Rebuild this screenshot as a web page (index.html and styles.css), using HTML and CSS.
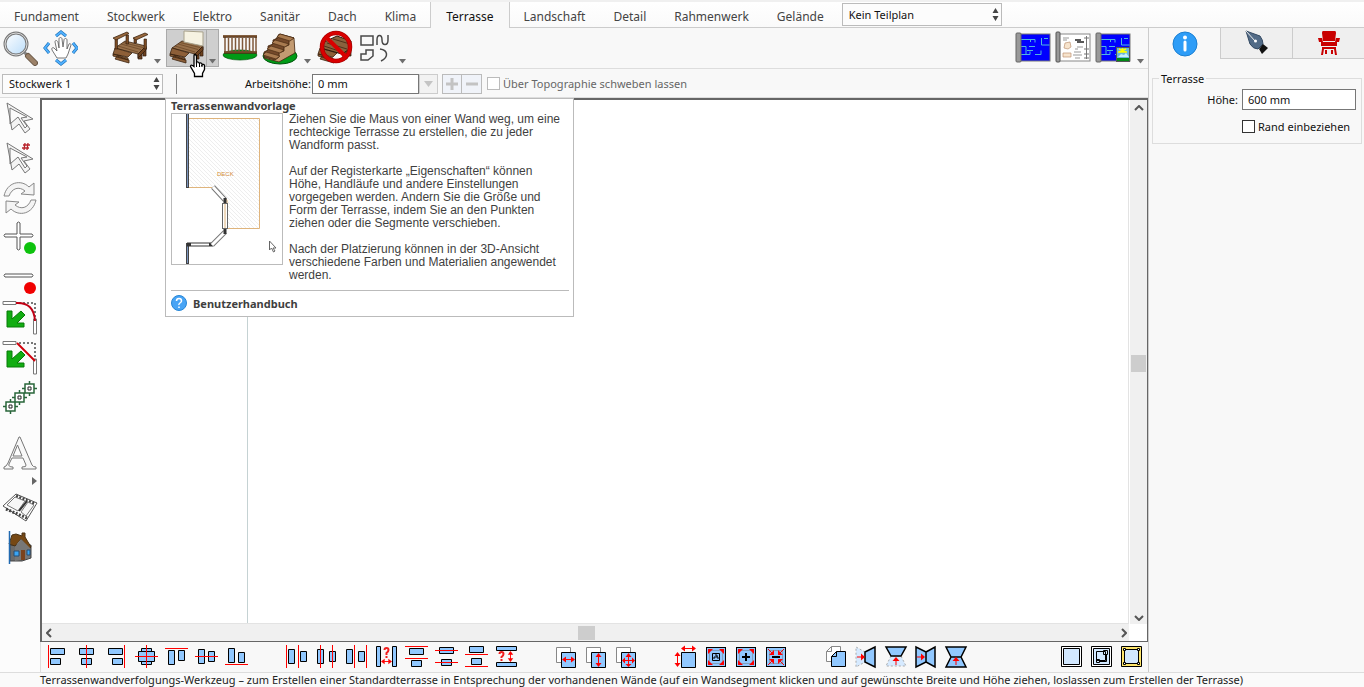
FILE: index.html
```html
<!DOCTYPE html>
<html lang="de">
<head>
<meta charset="utf-8">
<title>Terrasse</title>
<link rel="stylesheet" href="styles.css">
</head>
<body>
<svg class="defs" aria-hidden="true">
  <defs>
    <pattern id="hatch" width="4" height="4" patternUnits="userSpaceOnUse"><path d="M0 0l4 4M-1 3l2 2M3-1l2 2" stroke="#eee" stroke-width="1"/></pattern>
    <linearGradient id="lens" x1="0" y1="0" x2="1" y2="1"><stop offset="0" stop-color="#fff"/><stop offset="1" stop-color="#b9dcfa"/></linearGradient>
    <symbol id="caret" viewBox="0 0 7 5"><path d="M0 0h7L3.500 4.500z" fill="#6e6e6e"/></symbol>
    <symbol id="spin" viewBox="0 0 7 13"><path d="M3.500 0L6.500 5h-6zM3.500 13L.5 8h6z" fill="#444"/></symbol>
    <symbol id="harrow" viewBox="0 0 12 7"><path d="M2 3.500h8" stroke="#f00"/><path d="M0 3.500L4 .5v6zM12 3.500L8 .5v6z" fill="#f00"/></symbol>
    <symbol id="varrow" viewBox="0 0 7 12"><path d="M3.500 2v8" stroke="#f00"/><path d="M3.500 0L.5 4h6zM3.500 12L.5 8h6z" fill="#f00"/></symbol>
    <symbol id="corners" viewBox="0 0 24 24"><rect x="2.500" y="2.500" width="19" height="19" fill="#91c8ff" stroke="#000"/><rect x="5.500" y="5.500" width="13" height="13" fill="none" stroke="#777" stroke-dasharray="1 1"/></symbol>
    <symbol id="plan" viewBox="0 0 36 36"><rect x="3" y="4" width="32" height="27" fill="#00f" stroke="#777"/><path d="M6 9.500h14v3M15.500 9v3M6 16.500h5v8M6 24.500h9v-3M14 16.500h6M20 24.500h6v-4M26.500 8v7h8M29 8.500h4M12 20.500h6" fill="none" stroke="#4fb7df"/><rect x="1" y="3" width="5" height="29" rx="1" fill="#999" stroke="#666"/></symbol>
    <symbol id="deck" viewBox="0 0 36 36"><path d="M5 17h4v9H5zM26 21h4v8h-4zM31 17h3v9h-3z" fill="#6d421f" stroke="#2c190b" stroke-width=".7"/><path d="M3 18L13 11l21 5-8 8z" fill="#98704a" stroke="#3c2410" stroke-width=".8"/><path d="M6 16l20 6M9 14l20 5.500M11 12.500l20 5" stroke="#5c3a1c" stroke-width=".6"/><path d="M26 24l8-8v4l-8 8z" fill="#6d421f" stroke="#2c190b" stroke-width=".7"/><path d="M3 18l17 5-4 4L1 24zM1 24l15 4v2L1 26zM5 26l12 4v3L3 29z" fill="#8d5f38" stroke="#3c2410" stroke-width=".8"/></symbol>
  </defs>
</svg>

<div class="app">
  <nav class="tabs">
    <button class="tab">Fundament</button>
    <button class="tab">Stockwerk</button>
    <button class="tab">Elektro</button>
    <button class="tab">Sanitär</button>
    <button class="tab">Dach</button>
    <button class="tab">Klima</button>
    <button class="tab active">Terrasse</button>
    <button class="tab">Landschaft</button>
    <button class="tab">Detail</button>
    <button class="tab">Rahmenwerk</button>
    <button class="tab">Gelände</button>
    <span class="pick part"><select aria-label="Teilplan"><option>Kein Teilplan</option></select><svg class="spin"><use href="#spin"/></svg></span>
  </nav>

  <div class="work">
    <main class="editor">
      <div class="toolbar">
        <button class="tool" aria-label="Zoom"><svg viewBox="0 0 36 36"><path d="M22 22l5 5" stroke="#888" stroke-width="3"/><path d="M26 26l7 7" stroke="#6b5948" stroke-width="6" stroke-linecap="round"/><path d="M26 26l7 7" stroke="#9b8168" stroke-width="4" stroke-linecap="round"/><circle cx="14" cy="14" r="11" fill="url(#lens)" stroke="#777" stroke-width="3"/><circle cx="14" cy="14" r="11" fill="none" stroke="#ddd"/></svg></button>
        <button class="tool" aria-label="Verschieben"><svg viewBox="0 0 36 36"><path d="M14 6l5-4 5 4M14 30l5 4 5-4M7 13l-4 5 4 5M31 13l4 5-4 5" fill="none" stroke="#216fae" stroke-width="3"/><path d="M14 6l5-4 5 4M14 30l5 4 5-4M7 13l-4 5 4 5M31 13l4 5-4 5" fill="none" stroke="#4fb0ff" stroke-width="2"/><path d="M15 28l-5-8c-1-2 1-3 2-2l3 3-2-9c0-2 2-2 3 0l1 6V9c0-2 3-2 3 0l1 8 1-7c0-2 3-2 3 0v9l2-5c1-1 2 0 2 1l-3 9-2 4z" fill="#fff" stroke="#555" stroke-width=".8"/></svg></button>
        <span class="gap"></span>
        <button class="tool" aria-label="Terrasse"><svg viewBox="0 0 36 36"><use href="#deck" width="36" height="36"/><path d="M3 9h2.500v10H3zM14 5h2.500v9H14zM32 9h2.500v10H32zM22 8h2.500v5H22z" fill="#7b4c25" stroke="#2c190b" stroke-width=".6"/><path d="M1 8L15 2l2 1.500L4 10zM21 8l12-5 3 1.500L24 10z" fill="#98673c" stroke="#3c2410" stroke-width=".8"/></svg></button>
        <button class="drop" aria-label="Terrasse Auswahl"><svg><use href="#caret"/></svg></button>
        <span class="split">
          <button class="tool" aria-label="Terrassenwandvorlage"><svg viewBox="0 0 36 36"><use href="#deck" width="36" height="36"/><path d="M15 1l19 1v14l-19-4z" fill="#f6f2e2" stroke="#a9a28c"/></svg></button>
          <button class="drop" aria-label="Vorlage Auswahl"><svg><use href="#caret"/></svg></button>
          <svg class="hand" viewBox="0 0 17 25"><path d="M5.500 1.500q2 0 2 2v7q0-2 1.500-1.500t1.500 2q0-1.500 1.500-1t1 2q2-1.500 2.500.5v4l-2 4v3h-8v-3l-4-7q0-2 2-1l1.500 1v-10q0-2 .5-2z" fill="#fff" stroke="#000" stroke-width="1.300"/><path d="M7.500 10v4M10.500 11v3M13 12v2" stroke="#000"/></svg>
        </span>
        <button class="tool" aria-label="Geländer"><svg viewBox="0 0 36 36"><ellipse cx="18" cy="25" rx="17" ry="5" fill="#009b16" stroke="#00550c" stroke-width=".7"/><path d="M3 7v16M6.500 8v15M10 8v15M13.500 8v15M17 8v15M20.500 8v15M24 8v15M27.500 8v15M31 8v15M34 7v16" stroke="#80583a" stroke-width="1.500"/><path d="M1 6.500h34M2 22.500h33" stroke="#4d2e15" stroke-width="2.500"/><path d="M1 6h34M2 22h33" stroke="#8f6038"/></svg></button>
        <button class="tool" aria-label="Treppe"><svg viewBox="0 0 36 36"><ellipse cx="18" cy="26" rx="17" ry="8" fill="#009b16" stroke="#00550c"/><path d="M17 4l15 4 1 15-16 9L2 28z" fill="#c39b72" stroke="#41250e" stroke-width=".8"/><path d="M18 4L32 8 27 11v4l-5 2v4l-5 2v4l-4 3-11-3v-5l4-2v-4l5-2v-4l5-2z" fill="#74492a" stroke="#41250e" stroke-width=".8"/><path d="M18 4l14 4-4 3-13-4zM13 10l14 4-4 3-13-4zM9 16l13 4-4 3-13-4zM4 22l14 4-4 3-13-4z" fill="#a97b50" stroke="#41250e" stroke-width=".6"/></svg></button>
        <button class="drop" aria-label="Treppe Auswahl"><svg><use href="#caret"/></svg></button>
        <button class="tool" aria-label="Keine Terrasse"><svg viewBox="0 0 36 36"><use href="#deck" width="36" height="36"/><path d="M5 13l15-7 14 5v7l-9 6-18-5z" fill="#8a623d" stroke="#2c190b"/><path d="M7 16l18 6M10 13l20 6M16 9l17 5" stroke="#4f321b"/><circle cx="19" cy="17" r="14" fill="none" stroke="#a00" stroke-width="4.500"/><circle cx="19" cy="17" r="14" fill="none" stroke="#d90000" stroke-width="3"/><path d="M10 8l18 18" stroke="#d90000" stroke-width="4"/></svg></button>
        <button class="tool" aria-label="Formen"><svg viewBox="0 0 36 36" fill="none" stroke="#484848" stroke-width="1.500"><path d="M4 6h12v9H4zM20 15V10c0-6 5-6 5 0s6 6 6 0V5M4 24h5v-4h7v6l-5 4H4zM23 19c8 1 9 8 1 12"/></svg></button>
        <button class="drop" aria-label="Formen Auswahl"><svg><use href="#caret"/></svg></button>
        <span class="grow"></span>
        <button class="tool" aria-label="Planansicht"><svg><use href="#plan"/></svg></button>
        <button class="tool" aria-label="Layout"><svg viewBox="0 0 36 36"><rect x="4" y="4" width="31" height="27" fill="#fff" stroke="#888"/><path d="M9 18l1-5 5-1 1 5-3 2zM8 23h8v4H8z" fill="#f7e4cd" stroke="#bd9474" stroke-width=".7"/><path d="M20 10h6M22 12h7" stroke="#222" stroke-width="1.500"/><path d="M8 8h6M8 10h4M19 22h7M18 25h9M20 28h5M22 17h6M20 19h3" stroke="#999"/><path d="M31.500 6v23M29 8h5M29 19h5M29 24h5M29 28h5" stroke="#777"/><rect x="1" y="2" width="4" height="30" rx="1" fill="#999" stroke="#555"/></svg></button>
        <button class="tool" aria-label="Plan mit Bild"><svg viewBox="0 0 36 36"><use href="#plan" width="36" height="36"/><rect x="21.500" y="17.500" width="13" height="14" fill="#69b5df" stroke="#555"/><path d="M22 28h12v3H22z" fill="#008a15"/><path d="M23 27l3-3 3 1 2-2 3 4z" fill="#c7f0fb"/><path d="M23 22h9M27.500 18v4M24 19l7 3M31 19l-7 3" stroke="#ff0" stroke-width="1.500"/></svg></button>
        <button class="drop" aria-label="Plan Auswahl"><svg><use href="#caret"/></svg></button>
      </div>

      <div class="options">
        <span class="pick floor"><select aria-label="Stockwerk"><option>Stockwerk 1</option></select><svg class="spin"><use href="#spin"/></svg></span>
        <span class="rule"></span>
        <label class="text" for="height">Arbeitshöhe:</label>
        <input class="field height" id="height" value="0 mm">
        <button class="combo" aria-label="Höhe Auswahl" disabled><svg viewBox="0 0 9 6"><path d="M0 0h9L4.500 6z" fill="#c4c4c4"/></svg></button>
        <span class="steps">
          <button aria-label="Erhöhen" disabled><svg viewBox="0 0 14 14"><path d="M7 1v12M1 7h12" stroke="#c3c3c3" stroke-width="3"/></svg></button>
          <button aria-label="Verringern" disabled><svg viewBox="0 0 14 14"><path d="M1 7h12" stroke="#c3c3c3" stroke-width="3"/></svg></button>
        </span>
        <input class="check" type="checkbox" id="float" disabled>
        <label class="text muted" for="float">Über Topographie schweben lassen</label>
      </div>

      <div class="stage">
        <div class="side">
          <button class="tool" aria-label="Auswählen"><svg viewBox="0 0 36 36"><path d="M5 3l26 16-9 2 6 8-5 4-6-9-7 6zM8 8v16l8-7 7 11 2-2-6-8 6-1z" fill="#f4f4f4" stroke="#777" stroke-width="1" fill-rule="evenodd"/></svg></button>
          <button class="tool" aria-label="Genau auswählen"><svg viewBox="0 0 36 36"><path d="M5 3l26 16-9 2 6 8-5 4-6-9-7 6zM8 8v16l8-7 7 11 2-2-6-8 6-1z" fill="#f4f4f4" stroke="#777" stroke-width="1" fill-rule="evenodd"/><path d="M23 3l-1 7M26 3l-1 7M21 5h7M20 8h7" stroke="#b8242c" stroke-width="1.300"/></svg></button>
          <button class="tool" aria-label="Drehen"><svg viewBox="0 0 36 36" fill="#f4f4f4" stroke="#888"><path d="M2 16C5 2 19-1 27 7l5-4v12l-13-1 4-3C17 6 10 8 7 16zM34 20C31 34 17 37 9 29l-5 4V21l13 1-4 3c6 5 13 3 16-5z"/></svg></button>
          <button class="tool" aria-label="Hinzufügen"><svg viewBox="0 0 36 36"><path d="M15 3q1.500-2 3 0v11h12q2 1.500 0 3H18v12q-1.500 2-3 0V17H3q-2-1.500 0-3h12z" fill="#fff" stroke="#555"/><circle cx="28" cy="28" r="6" fill="#0dc20d"/></svg></button>
          <button class="tool" aria-label="Entfernen"><svg viewBox="0 0 36 36"><path d="M3 14h27q2 1.500 0 3H3q-2-1.500 0-3z" fill="#fff" stroke="#555"/><circle cx="28" cy="28" r="6" fill="#f00000"/></svg></button>
          <button class="tool" aria-label="Abrunden"><svg viewBox="0 0 36 36"><path d="M1 1.500h13v3H1zM31.500 19h3v15h-3z" fill="#fff" stroke="#777"/><path d="M17 3h16v17" fill="none" stroke="#777" stroke-width="2" stroke-dasharray="2 2"/><path d="M14 3q18-1 19 18" fill="none" stroke="#c00014" stroke-width="2"/><path d="M5 11v16h17v-4h-7l8-8-4-4-9 8v-8z" fill="#12ad12" stroke="#087b08" stroke-linejoin="round"/></svg></button>
          <button class="tool" aria-label="Abschrägen"><svg viewBox="0 0 36 36"><path d="M1 1.500h13v3H1zM31.500 19h3v15h-3z" fill="#fff" stroke="#777"/><path d="M17 3h16v17" fill="none" stroke="#777" stroke-width="2" stroke-dasharray="2 2"/><path d="M15 3l18 18" stroke="#d0000b" stroke-width="2"/><path d="M5 11v16h17v-4h-7l8-8-4-4-9 8v-8z" fill="#12ad12" stroke="#087b08" stroke-linejoin="round"/></svg></button>
          <button class="tool" aria-label="Vervielfältigen"><svg viewBox="0 0 36 36" fill="#fff" stroke="#28653a"><path d="M8.500 19v15M1 26.500h15M17.500 10v15M10 17.500h15M27.500 1v15M20 8.500h15" stroke-width="1.500"/><path d="M4 22h9v9H4zM13 13h9v9h-9zM23 4h9v9h-9z" stroke-width="1.500"/><path d="M7 25h3v3H7zM16 16h3v3h-3zM26 7h3v3h-3z" stroke="#222"/></svg></button>
          <span class="sidegap"></span>
          <button class="tool" aria-label="Text"><svg viewBox="0 0 36 36"><path d="M18 2l12 28q1 2 4 2v2H20v-2q5 0 4-2l-3-7H10l-3 6q-1 3 4 3v2H2v-2q2 0 4-4L17 2zM15.500 10L11 21h9z" fill="#f8f8f8" stroke="#777" fill-rule="evenodd"/></svg></button>
          <button class="more" aria-label="Mehr"><svg viewBox="0 0 5 8"><path d="M0 0l5 4-5 4z" fill="#666"/></svg></button>
          <button class="tool" aria-label="Film"><svg viewBox="0 0 36 36"><path d="M1 16L14 4l21 9-11 18z" fill="#fff" stroke="#555"/><path d="M4 19l21 9M14 6l19 8" stroke="#444" stroke-width="3" stroke-dasharray="2 1.500"/><path d="M5 15l8-8 10 4-7 10zM19 22l7-10 6 3-8 11z" fill="#f7f7f7" stroke="#777"/><path d="M17 21l8-10" stroke="#333" stroke-width="2"/></svg></button>
          <button class="tool" aria-label="Haus"><svg viewBox="0 0 36 36"><path d="M8 15h21v13l-9 3H8z" fill="#6c6c6c" stroke="#444"/><path d="M10 5l4-1 6 2V3h3v4l6 10-2 2-8-10-6 7-6-2z" fill="#764814" stroke="#483014"/><path d="M19 9l-6 8v14l15-3V18z" fill="#777"/><path d="M19 20h4v10h-4z" fill="#7b421c"/><path d="M12 21h5v5h-5zM25 20h3v5h-3z" fill="#3aa5f4" stroke="#264d72"/><path d="M7.500 1v33" stroke="#216ab1" stroke-width="1.500"/></svg></button>
        </div>

        <div class="view">
          <div class="canvas">
            <div class="guide"></div>
          </div>
          <div class="vbar">
            <svg viewBox="0 0 10 6"><path d="M1 5l4-4 4 4" fill="none" stroke="#555" stroke-width="2"/></svg>
            <span class="vthumb"></span>
            <svg viewBox="0 0 10 6"><path d="M1 1l4 4 4-4" fill="none" stroke="#555" stroke-width="2"/></svg>
          </div>
          <div class="hbar">
            <svg viewBox="0 0 6 10"><path d="M5 1L1 5l4 4" fill="none" stroke="#555" stroke-width="2"/></svg>
            <span class="hthumb"></span>
            <svg viewBox="0 0 6 10"><path d="M1 1l4 4-4 4" fill="none" stroke="#555" stroke-width="2"/></svg>
          </div>
          <div class="corner"></div>
        </div>

        <div class="arrange">
          <button aria-label="Links ausrichten"><svg viewBox="0 0 24 24"><path class="r" d="M4.500 0v23"/><path class="b" d="M6.500 3.500h14v6h-14zM6.500 13.500h10v6h-10z"/></svg></button>
          <button aria-label="Mittig ausrichten"><svg viewBox="0 0 24 24"><path class="b" d="M5.500 3.500h14v6h-14zM7.500 13.500h10v6h-10z"/><path class="r" d="M12.500 0v23"/></svg></button>
          <button aria-label="Rechts ausrichten"><svg viewBox="0 0 24 24"><path class="b" d="M4.500 3.500h14v6h-14zM8.500 13.500h10v6h-10z"/><path class="r" d="M20.500 0v23"/></svg></button>
          <button aria-label="Zentrieren"><svg viewBox="0 0 24 24"><path class="b" d="M7.500 3.500h10v16h-10z"/><path class="b" d="M4.500 6.500h16v10h-16z"/><path class="r" d="M12.500 0v23M1 11.500h23"/></svg></button>
          <button aria-label="Oben ausrichten"><svg viewBox="0 0 24 24"><path class="r" d="M1 3.500h23"/><path class="b" d="M4.500 5.500h6v14h-6zM14.500 5.500h6v10h-6z"/></svg></button>
          <button aria-label="Waagerecht ausrichten"><svg viewBox="0 0 24 24"><path class="b" d="M4.500 4.500h6v14h-6zM14.500 6.500h6v10h-6z"/><path class="r" d="M1 11.500h23"/></svg></button>
          <button aria-label="Unten ausrichten"><svg viewBox="0 0 24 24"><path class="b" d="M4.500 3.500h6v14h-6zM14.500 7.500h6v10h-6z"/><path class="r" d="M1 19.500h23"/></svg></button>
          <span class="gap"></span>
          <button aria-label="Links verteilen"><svg viewBox="0 0 24 24"><path class="r" d="M2.500 0v23M14.500 0v23"/><path class="b" d="M4.500 4.500h6v14h-6zM16.500 6.500h6v10h-6z"/></svg></button>
          <button aria-label="Mittig verteilen"><svg viewBox="0 0 24 24"><path class="b" d="M3.500 4.500h6v14h-6zM15.500 6.500h6v10h-6z"/><path class="r" d="M6.500 0v23M18.500 0v23"/></svg></button>
          <button aria-label="Rechts verteilen"><svg viewBox="0 0 24 24"><path class="b" d="M2.500 4.500h6v14h-6zM14.500 6.500h6v10h-6z"/><path class="r" d="M10.500 0v23M22.500 0v23"/></svg></button>
          <button aria-label="Abstand waagerecht"><svg viewBox="0 0 24 24"><path class="b" d="M2.500 1.500h4v20h-4zM18.500 1.500h4v20h-4z"/><path class="q" d="M10.500 5q0-2 2-2t2 2q0 1.500-2 3v2M12.500 11v2"/><use href="#harrow" x="7" y="13" width="11" height="7"/></svg></button>
          <button aria-label="Oben verteilen"><svg viewBox="0 0 24 24"><path class="r" d="M1 1.500h23M1 13.500h23"/><path class="b" d="M5.500 3.500h14v6h-14zM7.500 15.500h10v6h-10z"/></svg></button>
          <button aria-label="Mitte verteilen"><svg viewBox="0 0 24 24"><path class="b" d="M5.500 2.500h14v6h-14zM7.500 14.500h10v6h-10z"/><path class="r" d="M1 5.500h23M1 17.500h23"/></svg></button>
          <button aria-label="Unten verteilen"><svg viewBox="0 0 24 24"><path class="b" d="M5.500 1.500h14v6h-14zM7.500 13.500h10v6h-10z"/><path class="r" d="M1 9.500h23M1 21.500h23"/></svg></button>
          <button aria-label="Abstand senkrecht"><svg viewBox="0 0 24 24"><path class="b" d="M2.500 1.500h20v4h-20zM2.500 17.500h20v4h-20z"/><path class="q" d="M5.500 9q0-2 2-2t2 2q0 1.500-2 3v1M7.500 14v2"/><use href="#varrow" x="13" y="6" width="7" height="11"/></svg></button>
          <span class="gap"></span>
          <button aria-label="Gleiche Breite"><svg viewBox="0 0 24 24"><path class="g" d="M2.500 2.500h14v15h-14z"/><path class="b" d="M7.500 7.500h14v15h-14z"/><path class="r" d="M9 14.500h11"/><path class="k" d="M8 14.500l4-3v6zM21 14.500l-4-3v6z"/></svg></button>
          <button aria-label="Gleiche Höhe"><svg viewBox="0 0 24 24"><path class="g" d="M2.500 2.500h14v15h-14z"/><path class="b" d="M7.500 7.500h14v15h-14z"/><path class="r" d="M14.500 10v10"/><path class="k" d="M14.500 8l-3 4h6zM14.500 22l-3-4h6z"/></svg></button>
          <button aria-label="Gleiche Größe"><svg viewBox="0 0 24 24"><path class="g" d="M2.500 2.500h14v15h-14z"/><path class="b" d="M7.500 7.500h14v15h-14z"/><path class="r" d="M9 15.500h11M14.500 10v10"/><path class="k" d="M8 15.500l3-3v6zM21 15.500l-3-3v6zM14.500 8l-3 4h6zM14.500 22l-3-3h6z"/></svg></button>
          <span class="gap"></span>
          <button aria-label="Maße"><svg viewBox="0 0 24 24"><path class="b" d="M7.500 7.500h14v15h-14z"/><path class="r" d="M9 3.500h12M3.500 9v12"/><path class="k" d="M7 3.500l4-3v6zM22 3.500l-4-3v6zM3.500 7l-3 4h6zM3.500 22l-3-4h6z"/></svg></button>
          <button aria-label="Skalieren"><svg viewBox="0 0 24 24"><use href="#corners" width="24" height="24"/><path class="k" d="M4 4h5L4 9zM20 4h-5l5 5zM4 20h5l-5-5zM20 20h-5l5-5z"/><path class="b" d="M8.500 8.500h7v7h-7z"/><path d="M10 14v-2h4v2M11 10h2v2" fill="none" stroke="#000"/></svg></button>
          <button aria-label="Vergrößern"><svg viewBox="0 0 24 24"><use href="#corners" width="24" height="24"/><path class="k" d="M4 4h5L4 9zM20 4h-5l5 5zM4 20h5l-5-5zM20 20h-5l5-5z"/><path d="M12 8v8M8 12h8" stroke="#000" stroke-width="2"/></svg></button>
          <button aria-label="Verkleinern"><svg viewBox="0 0 24 24"><use href="#corners" width="24" height="24"/><path class="k" d="M10 10H5l5-5zM14 10h5l-5-5zM10 14H5l5 5zM14 14h5l-5 5z"/><path d="M4 4l4 4M20 4l-4 4M4 20l4-4M20 20l-4-4" stroke="#f00"/><path d="M8 12h8" stroke="#000" stroke-width="2"/></svg></button>
          <span class="gap"></span>
          <button aria-label="Kopieren"><svg viewBox="0 0 24 24"><path class="g" d="M7.500 1.500h9v15h-14v-10zM7.500 1.500v5h-5"/><path class="b" d="M12.500 6.500h9v15h-14v-10zM12.500 6.500v5h-5"/></svg></button>
          <button aria-label="Kopie nach rechts spiegeln"><svg viewBox="0 0 24 24"><path class="d" d="M11 7L2 2v20l9-5z"/><path class="s" d="M11 7l10-5v20l-10-5z"/><path class="k" d="M3 11.500h4v-3l4 3.500-4 3.500v-3H3z"/></svg></button>
          <button aria-label="Kopie nach oben spiegeln"><svg viewBox="0 0 24 24"><path class="d" d="M7 11L2 21h20l-5-10z"/><path class="s" d="M7 11L2 2h20l-5 9z"/><path class="k" d="M11.500 20v-4h-3l3.500-4 3.500 4h-3v4z"/></svg></button>
          <button aria-label="Nach rechts spiegeln"><svg viewBox="0 0 24 24"><path class="s" d="M12 7L2 2v20l10-5zM12 7l9-5v20l-9-5z"/><path class="k" d="M3 11.500h4v-3l4 3.500-4 3.500v-3H3z"/></svg></button>
          <button aria-label="Nach oben spiegeln"><svg viewBox="0 0 24 24"><path class="s" d="M7 12L2 2h20l-5 10zM7 12L2 22h20l-5-10z"/><path class="k" d="M11.500 20v-4h-3l3.500-4 3.500 4h-3v4z"/></svg></button>
          <span class="grow"></span>
          <button aria-label="Füllung"><svg viewBox="0 0 24 24"><path class="w" d="M1.500 1.500h20v20h-20z"/><path class="l" d="M3.500 3.500h16v16h-16z"/></svg></button>
          <button aria-label="Ausschnitt"><svg viewBox="0 0 24 24"><path class="w" d="M1.500 1.500h20v20h-20z"/><path class="l" d="M3.500 3.500h16v16h-16zM6.500 6.500h9v9h-9zM13.500 5.500h4v4h-4zM6.500 14.500h3v3h-3zM9.500 16.500h7v-7"/></svg></button>
          <button aria-label="Griffe"><svg viewBox="0 0 24 24"><path class="y" d="M1.500 1.500h20v20h-20z"/><path class="l" d="M4.500 4.500h14v14h-14z"/><path class="w" d="M3.500 3.500h2v2h-2zM17.500 3.500h2v2h-2zM3.500 17.500h2v2h-2zM17.500 17.500h2v2h-2z"/></svg></button>
        </div>

        <aside class="tip">
          <h2>Terrassenwandvorlage</h2>
          <div class="tipbody">
            <svg class="pic" viewBox="0 0 112 152"><rect x=".5" y=".5" width="111" height="151" fill="#fff" stroke="#bbb"/><path d="M17 5.500h71.500v110H56V87L42 74.500H17z" fill="url(#hatch)" stroke="#dfb47c"/><path d="M16.500 1v74M16.500 151v-21" stroke="#444" stroke-width="3"/><path d="M16.500 1v73M16.500 150v-19" stroke="#7993bd"/><path d="M16 131.500h26" stroke="#333" stroke-width="4"/><path d="M20 131.500h18" stroke="#fff" stroke-width="2"/><path d="M42 74l12 13M54 119l-13 13" stroke="#777" stroke-width="5"/><path d="M42 74l12 13M54 119l-13 13" stroke="#fff" stroke-width="3"/><path d="M54 85v36" stroke="#333" stroke-width="3"/><rect x="51.500" y="90.500" width="5" height="25" fill="#fff" stroke="#666"/><path d="M54 91v24" stroke="#dfb47c"/><text x="46" y="63">DECK</text><path d="M98.500 128v9l2-2 2 4 1.500-1-2-3h3z" fill="#fff" stroke="#666"/></svg>
            <div class="copy">
              <p>Ziehen Sie die Maus von einer Wand weg, um eine<br>rechteckige Terrasse zu erstellen, die zu jeder<br>Wandform passt.</p>
              <p>Auf der Registerkarte „Eigenschaften“ können<br>Höhe, Handläufe und andere Einstellungen<br>vorgegeben werden. Andern Sie die Größe und<br>Form der Terrasse, indem Sie an den Punkten<br>ziehen oder die Segmente verschieben.</p>
              <p>Nach der Platzierung können in der 3D-Ansicht<br>verschiedene Farben und Materialien angewendet<br>werden.</p>
            </div>
          </div>
          <a class="manual" href="#handbuch"><svg viewBox="0 0 16 16"><circle cx="8" cy="8" r="7.500" fill="#48a4f5" stroke="#2686d6"/><path d="M5.500 6q0-2.500 2.500-2.500T10.500 6q0 1-1.500 2t-1 2M8 11.500v1.500" fill="none" stroke="#fff" stroke-width="1.500"/></svg>Benutzerhandbuch</a>
        </aside>
      </div>
    </main>

    <aside class="panel">
      <div class="ptabs">
        <button class="active" aria-label="Eigenschaften"><svg viewBox="0 0 26 26"><circle cx="13" cy="13" r="12" fill="#2e9df7" stroke="#1b7fd2"/><circle cx="13" cy="6.500" r="2" fill="#fff"/><path d="M13 11v8" stroke="#fff" stroke-width="3" stroke-linecap="round"/></svg></button>
        <button aria-label="Stift"><svg viewBox="0 0 26 26"><path d="M2 1l14 5q3 4 3 8l-5 5q-5 0-8-5z" fill="#526b87" stroke="#344a63"/><path d="M2 1l9 10" stroke="#eee"/><circle cx="11.500" cy="11" r="1.500" fill="#fff"/><path d="M15 19l4-5 5 4-6 6z" fill="#111"/></svg></button>
        <button aria-label="Möbel"><svg viewBox="0 0 26 26" fill="#c90000"><path d="M7 1h12q1 0 1 2l-1 8H7L6 3q0-2 1-2zM2 8h4l1 4h12l1-4h4l-1 4h-2v4H5v-4H3zM6 17h14v2H6zM6 19h2l-1 6H5zM18 19h2l1 6h-2zM9 20h2v4H9zM15 20h2v4h-2z"/></svg></button>
      </div>
      <fieldset>
        <legend>Terrasse</legend>
        <div class="row"><label for="deckheight">Höhe:</label><input class="field" id="deckheight" value="600 mm"></div>
        <label class="edge"><input class="check dark" type="checkbox">Rand einbeziehen</label>
      </fieldset>
    </aside>
  </div>
  <footer>Terrassenwandverfolgungs-Werkzeug – zum Erstellen einer Standardterrasse in Entsprechung der vorhandenen Wände (auf ein Wandsegment klicken und auf gewünschte Breite und Höhe ziehen, loslassen zum Erstellen der Terrasse)</footer>
</div>
</body>
</html>
```
FILE: styles.css
```css
* { box-sizing: border-box; }
body { margin: 0; font-family: "Noto Sans", "Open Sans", sans-serif; font-size: 11px; color: #111; }
button { margin: 0; padding: 0; border: 0; background: none; font: inherit; color: inherit; }
input, select { margin: 0; font: inherit; color: inherit; border-radius: 0; }
svg { display: block; flex: none; }
.defs { position: absolute; width: 0; height: 0; }
.grow { flex: 1; }
.gap { width: 30px; flex: none; }

.app { display: flex; flex-direction: column; height: 100vh; overflow: hidden; background: #f8f8f8; border-top: 2px solid #f0f0f0; }
.tabs { display: flex; height: 26px; flex: none; background: linear-gradient(#fff, #fafafa); border-bottom: 1px solid #ccc; font-size: 12px; color: #444; }
.tab { padding: 3px 14px 0; white-space: nowrap; }
.tab.active { margin-bottom: -1px; background: #f8f8f8; border: solid #ccc; border-width: 0 1px; padding: 3px 15px 0; color: #111; }

.pick { display: grid; align-items: center; }
.pick > * { grid-area: 1 / 1; }
.pick select { appearance: none; width: 100%; height: 100%; padding: 0 6px; border: 1px solid #bbb; background: #fcfcfc; color: #111; }
.spin { width: 7px; height: 13px; justify-self: end; margin-right: 3px; pointer-events: none; }
.part { width: 160px; height: 23px; margin: 1px 0 0 4px; font-size: 11px; }

.work { display: flex; flex: 1; min-height: 0; }
.editor { display: flex; flex-direction: column; flex: 1; min-width: 0; }
.toolbar { display: flex; height: 41px; flex: none; border-bottom: 1px solid #ddd; }
.tool { display: grid; place-items: center; width: 40px; height: 40px; flex: none; }
.tool svg { width: 36px; height: 36px; }
.drop { display: flex; align-items: flex-end; justify-content: center; width: 15px; height: 38px; padding-bottom: 2px; flex: none; }
.drop svg { width: 7px; height: 5px; }
.split { position: relative; display: flex; width: 53px; height: 38px; margin: 1px 1px 0; background: #cfcfcf; border: 1px solid #aaa; }
.split .tool { width: 39px; height: 36px; }
.split .drop { width: 12px; height: 36px; border-left: 1px solid #aaa; }
.hand { position: absolute; left: 22px; top: 23px; width: 17px; height: 25px; z-index: 5; }

.options { display: flex; align-items: center; height: 29px; flex: none; padding: 1px 2px 0; border-bottom: 1px solid #ddd; }
.floor { width: 161px; height: 20px; }
.rule { width: 1px; height: 20px; margin: 0 68px 0 13px; background: #888; }
.text { white-space: nowrap; }
.muted { color: #666; }
.field { height: 20px; padding: 0 5px; border: 1px solid #777; background: #fff; }
.height { width: 107px; margin-left: 1px; }
.combo { display: grid; place-items: center; width: 19px; height: 20px; border: 1px solid #ccc; background: #f2f2f2; }
.combo svg { width: 9px; height: 6px; }
.steps { display: flex; margin: 0 5px 0 4px; }
.steps button { display: grid; place-items: center; width: 20px; height: 20px; border: 1px solid #bbb; background: #f0f3f9; }
.steps button + button { border-left: 0; }
.steps svg { width: 14px; height: 14px; }
.check { appearance: none; width: 13px; height: 13px; margin: 0 3px 0 0; flex: none; border: 1px solid #bbb; background: #fff; }
.check.dark { border-color: #333; }

.stage { position: relative; flex: 1; min-height: 0; display: grid; grid-template-columns: 40px 1fr; grid-template-rows: 1fr 30px; }
.side { grid-row: 1 / 3; display: flex; flex-direction: column; overflow: hidden; background: #fcfcfc; }
.sidegap { height: 15px; flex: none; }
.more { height: 15px; flex: none; padding: 0 3px 0 0; display: flex; align-items: center; justify-content: flex-end; }
.more svg { width: 5px; height: 8px; }
.view { display: grid; grid-template-columns: 1fr 18px; grid-template-rows: 1fr 17px; background: #fff; border: solid #666; border-width: 2px 1px 1px 2px; }
.canvas { border: solid #e3e3e3; border-width: 0 1px 1px 0; }
.guide { width: 1px; height: 100%; margin-left: 205px; background: #c5d2d3; }
.vbar, .hbar { display: flex; align-items: center; justify-content: space-between; background: #f0f0f0; }
.vbar { flex-direction: column; padding: 5px 0 3px; margin-left: 1px; }
.vbar svg { width: 10px; height: 6px; }
.hbar { padding: 0 2px 0 4px; }
.hbar svg { width: 6px; height: 10px; }
.vthumb { width: 15px; height: 17px; background: #cdcdcd; }
.hthumb { width: 17px; height: 14px; background: #cdcdcd; }

.arrange { display: flex; min-width: 0; padding: 0 1px 0 0; border-left: 1px solid #ddd; }
.arrange button { display: grid; place-items: center; width: 30px; height: 30px; flex: none; }
.arrange svg { width: 24px; height: 24px; }
.b { fill: #91c8ff; stroke: #000; }
.r { fill: none; stroke: #f00; }
.q { fill: none; stroke: #f02020; stroke-width: 2; }
.k { fill: #f00; }
.g { fill: #fff; stroke: #888; }
.d { fill: #d6eaff; stroke: #aaa; stroke-dasharray: 2 2; }
.s { fill: #91c8ff; stroke: #000; stroke-width: 1.500; }
.w { fill: #fff; stroke: #000; }
.l { fill: #d2e8ff; stroke: #000; }
.y { fill: #ffe66c; stroke: #000; }

.tip { position: absolute; left: 165px; top: 0; width: 409px; height: 219px; padding: 0 4px 0 5px; background: #fff; border: 1px solid #bbb; color: #3f3f3f; }
.tip h2 { margin: 0; font-size: 11px; line-height: 14px; }
.tipbody { display: flex; gap: 6px; height: 178px; border-bottom: 1px solid #bbb; }
.pic { width: 112px; height: 152px; }
.pic text { font: 6px "Liberation Sans", sans-serif; fill: #d38b36; }
.copy { font: 12px/13px "Liberation Sans", Arial, sans-serif; white-space: nowrap; }
.copy p { margin: 0 0 13px; }
.manual { display: flex; align-items: center; gap: 6px; height: 24px; font-weight: bold; color: inherit; text-decoration: none; }
.manual svg { width: 16px; height: 16px; }

.panel { width: 216px; flex: none; border-left: 1px solid #ccc; }
.ptabs { display: flex; height: 31px; }
.ptabs button { display: grid; place-items: center; flex: 1; background: #efefef; border: solid #ccc; border-width: 0 0 1px 1px; }
.ptabs .active { background: none; border: 0; }
.ptabs svg { width: 26px; height: 26px; }
fieldset { display: flex; flex-direction: column; align-items: flex-end; gap: 9px; margin: 12px 2px 0 3px; padding: 3px 5px 9px; border: 1px solid #ddd; }
legend { margin-left: 1px; padding: 0 2px; line-height: 15px; }
.row { display: flex; align-items: center; gap: 4px; }
.row .field { width: 114px; height: 21px; }
.edge { display: flex; align-items: center; width: 114px; white-space: nowrap; }
footer { height: 15px; flex: none; padding-left: 40px; border-top: 1px solid #ddd; background: #fafafa; line-height: 13px; white-space: nowrap; color: #222; }
```
